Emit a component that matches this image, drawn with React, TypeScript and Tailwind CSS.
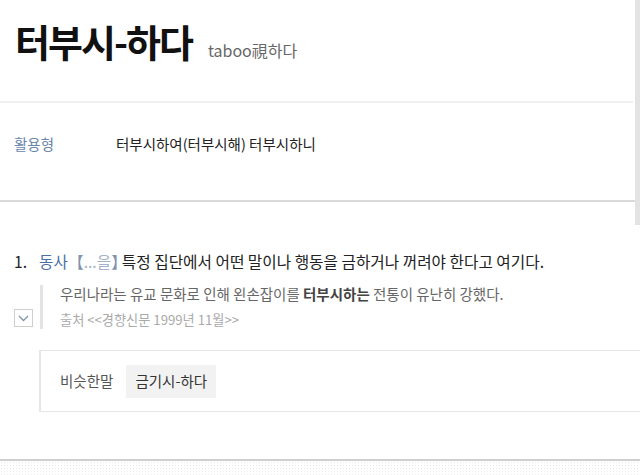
import React from "react";

const kr = "[font-family:'Noto_Sans_CJK_KR','Noto_Sans',sans-serif]";

const ChevronDown = () => (
  <svg width="11" height="7" viewBox="0 0 11 7" fill="none">
    <path d="M1 1l4.5 4.5L10 1" stroke="#7f93ad" strokeWidth="1.3" />
  </svg>
);

export default function App() {
  return (
    <div className={`relative w-[640px] h-[475px] overflow-hidden bg-white ${kr}`}>
      {/* scrollbar thumb */}
      <div className="absolute right-0 top-0 w-[5px] h-[225px] bg-[#e3e3e3]" />

      <header className="h-[101px] pl-[15px] pt-[20px] flex items-baseline gap-[16px]">
        <h1 className="text-[38px] leading-[42px] font-bold tracking-[-2px] text-[#111]">
          터부시-하다
        </h1>
        <span className="text-[16px] text-[#666]">taboo視하다</span>
      </header>
      <div className="h-[2px] w-[633px] bg-[#f0f0f0]" />

      <section className="h-[97px] pl-[14px] pt-[31px] flex text-[14.5px] leading-[20px]">
        <span className="w-[102px] text-[#6a86ad]">활용형</span>
        <span className="text-[#222]">터부시하여(터부시해) 터부시하니</span>
      </section>
      <div className="h-[2px] w-full bg-[#d9d9d9]" />

      <section className="pl-[14px] pt-[49px]">
        <p className="text-[15.7px] leading-[22px] text-[#222]">
          <span className="mr-[12px]">1.</span>
          <span className="text-[#4b6fa5]">동사</span>
          <span className="text-[#8094b0]">【</span>
          <span className="text-[#a3b3c9]">...을</span>
          <span className="text-[#8094b0] tracking-[-5px]">】</span>
          특정 집단에서 어떤 말이나 행동을 금하거나 꺼려야 한다고 여기다.
        </p>

        <div className="flex mt-[12px]">
          <div className="w-[26px] flex items-end pb-[2px]">
            <div className="w-[19px] h-[18px] border border-[#cfcfcf] flex items-center justify-center">
              <ChevronDown />
            </div>
          </div>
          <div className="border-l-[3px] border-[#e3e3e3] pl-[17px] flex flex-col gap-[8px]">
            <p className="text-[14.5px] leading-[18px] text-[#666]">
              우리나라는 유교 문화로 인해 왼손잡이를{" "}
              <b className="font-bold text-[#444]">터부시하는</b> 전통이 유난히 강했다.
            </p>
            <p className="text-[13.2px] leading-[18px] text-[#aaa]">
              출처 &lt;&lt;경향신문 1999년 11월&gt;&gt;
            </p>
          </div>
        </div>

        <div className="ml-[25px] mt-[21px] h-[62px] border border-l-2 border-[#e6e6e6] border-r-0 pl-[19px] flex items-center gap-[13px] text-[14.5px]">
          <span className="text-[#555]">비슷한말</span>
          <span className="h-[33px] px-[9px] flex items-center bg-[#f2f2f2] text-[#333]">
            금기시-하다
          </span>
        </div>
      </section>

      <div className="mt-[47px] h-[2px] w-full bg-[#cfcfcf]" />
      <div className="h-[20px] bg-[radial-gradient(#e9e9e9_1px,transparent_1px)] bg-[length:3px_3px]" />
    </div>
  );
}
